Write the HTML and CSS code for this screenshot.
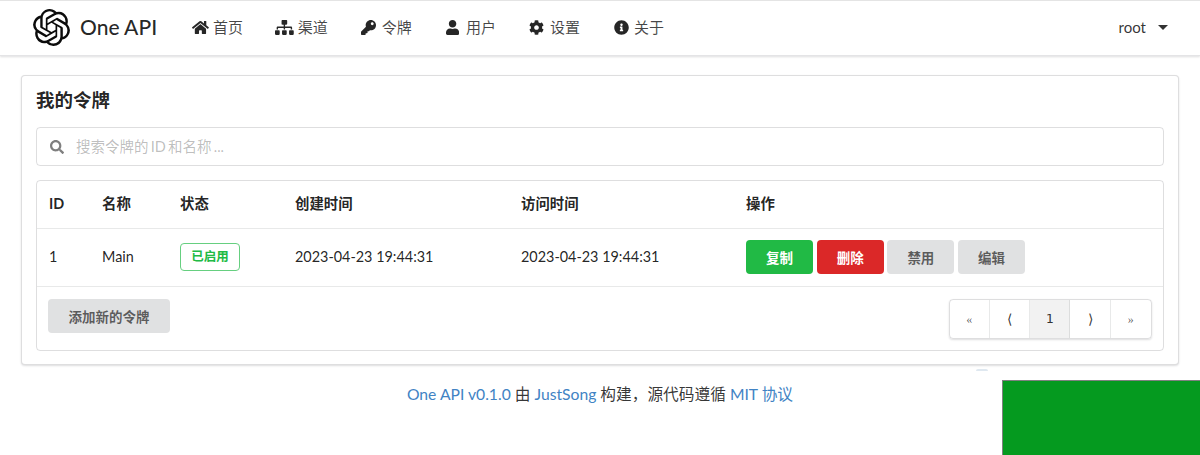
FILE: index.html
```html
<!DOCTYPE html>
<html lang="zh-CN">
<head>
<meta charset="utf-8">
<title>One API</title>
<link rel="stylesheet" href="styles.css">
</head>
<body>
<header class="navbar">
  <a class="brand">
    <svg class="logo" viewBox="0 0 24 24"><path d="M22.2819 9.8211a5.9847 5.9847 0 0 0-.5157-4.9108 6.0462 6.0462 0 0 0-6.5098-2.9A6.0651 6.0651 0 0 0 4.9807 4.1818a5.9847 5.9847 0 0 0-3.9977 2.9 6.0462 6.0462 0 0 0 .7427 7.0966 5.98 5.98 0 0 0 .511 4.9107 6.051 6.051 0 0 0 6.5146 2.9001A5.9847 5.9847 0 0 0 13.2599 24a6.0557 6.0557 0 0 0 5.7718-4.2058 5.9894 5.9894 0 0 0 3.9977-2.9001 6.0557 6.0557 0 0 0-.7475-7.0729zm-9.022 12.6081a4.4755 4.4755 0 0 1-2.8764-1.0408l.1419-.0804 4.7783-2.7582a.7948.7948 0 0 0 .3927-.6813v-6.7369l2.02 1.1686a.071.071 0 0 1 .038.052v5.5826a4.504 4.504 0 0 1-4.4945 4.4944zm-9.6607-4.1254a4.4708 4.4708 0 0 1-.5346-3.0137l.142.0852 4.783 2.7582a.7712.7712 0 0 0 .7806 0l5.8428-3.3685v2.3324a.0804.0804 0 0 1-.0332.0615L9.74 19.9502a4.4992 4.4992 0 0 1-6.1408-1.6464zM2.3408 7.8956a4.485 4.485 0 0 1 2.3655-1.9728V11.6a.7664.7664 0 0 0 .3879.6765l5.8144 3.3543-2.0201 1.1685a.0757.0757 0 0 1-.071 0l-4.8303-2.7865A4.504 4.504 0 0 1 2.3408 7.872zm16.5963 3.8558L13.1038 8.364 15.1192 7.2a.0757.0757 0 0 1 .071 0l4.8303 2.7913a4.4944 4.4944 0 0 1-.6765 8.1042v-5.6772a.79.79 0 0 0-.407-.667zm2.0107-3.0231l-.142-.0852-4.7735-2.7818a.7759.7759 0 0 0-.7854 0L9.409 9.2297V6.8974a.0662.0662 0 0 1 .0284-.0615l4.8303-2.7866a4.4992 4.4992 0 0 1 6.6802 4.66zM8.3065 12.863l-2.02-1.1638a.0804.0804 0 0 1-.038-.0567V6.0742a4.4992 4.4992 0 0 1 7.3757-3.4537l-.142.0805L8.704 5.459a.7948.7948 0 0 0-.3927.6813zm1.0976-2.3654l2.602-1.4998 2.6069 1.4998v2.9994l-2.5974 1.4997-2.6067-1.4997Z"/></svg>
    <span class="brand-name">One API</span>
  </a>
  <nav class="nav-items">
    <a class="nav-item nav-home"><span class="icon-slot"><svg class="icon" viewBox="0 0 576 512"><path d="M280.37 148.26L96 300.11V464a16 16 0 0 0 16 16l112.06-.29a16 16 0 0 0 15.92-16V368a16 16 0 0 1 16-16h64a16 16 0 0 1 16 16v95.64a16 16 0 0 0 16 16.05L464 480a16 16 0 0 0 16-16V300L295.67 148.26a12.19 12.19 0 0 0-15.3 0zM571.6 251.47L488 182.56V44.05a12 12 0 0 0-12-12h-56a12 12 0 0 0-12 12v72.61L318.47 43a48 48 0 0 0-61 0L4.34 251.47a12 12 0 0 0-1.6 16.9l25.5 31A12 12 0 0 0 45.15 301l235.22-193.74a12.19 12.19 0 0 1 15.3 0L530.9 301a12 12 0 0 0 16.9-1.6l25.5-31a12 12 0 0 0-1.7-16.93z"/></svg></span>首页</a>
    <a class="nav-item nav-channel"><span class="icon-slot"><svg class="icon" viewBox="0 0 640 512"><path d="M128 352H32c-17.67 0-32 14.33-32 32v96c0 17.67 14.33 32 32 32h96c17.67 0 32-14.33 32-32v-96c0-17.67-14.33-32-32-32zm-24-80h192v48h48v-48h192v48h48v-57.59c0-21.17-17.23-38.41-38.41-38.41H344v-64h40c17.67 0 32-14.33 32-32V32c0-17.67-14.33-32-32-32H256c-17.67 0-32 14.33-32 32v96c0 17.67 14.33 32 32 32h40v64H94.41C73.23 224 56 241.23 56 262.41V320h48v-48zm264 80h-96c-17.67 0-32 14.33-32 32v96c0 17.67 14.33 32 32 32h96c17.67 0 32-14.33 32-32v-96c0-17.67-14.33-32-32-32zm240 0h-96c-17.67 0-32 14.33-32 32v96c0 17.67 14.33 32 32 32h96c17.67 0 32-14.33 32-32v-96c0-17.67-14.33-32-32-32z"/></svg></span>渠道</a>
    <a class="nav-item nav-token"><span class="icon-slot"><svg class="icon" viewBox="0 0 512 512"><path d="M512 176.001C512 273.203 433.202 352 336 352c-11.22 0-22.19-1.062-32.827-3.069l-24.012 27.014A23.999 23.999 0 0 1 261.223 384H224v40c0 13.255-10.745 24-24 24h-40v40c0 13.255-10.745 24-24 24H24c-13.255 0-24-10.745-24-24v-78.059c0-6.365 2.529-12.47 7.029-16.971l161.802-161.802C163.108 213.814 160 195.271 160 176 160 78.798 238.797.001 335.999 0 433.488-.001 512 78.511 512 176.001zM336 128c0 26.51 21.49 48 48 48s48-21.49 48-48-21.49-48-48-48-48 21.49-48 48z"/></svg></span>令牌</a>
    <a class="nav-item nav-user"><span class="icon-slot"><svg class="icon" viewBox="0 0 448 512"><path d="M224 256c70.7 0 128-57.3 128-128S294.7 0 224 0 96 57.3 96 128s57.3 128 128 128zm89.6 32h-16.7c-22.2 10.2-46.9 16-72.9 16s-50.6-5.8-72.9-16h-16.7C60.2 288 0 348.2 0 422.4V464c0 26.5 21.5 48 48 48h352c26.5 0 48-21.5 48-48v-41.6c0-74.2-60.2-134.4-134.4-134.4z"/></svg></span>用户</a>
    <a class="nav-item nav-setting"><span class="icon-slot"><svg class="icon" viewBox="0 0 512 512"><path d="M487.4 315.7l-42.6-24.6c4.3-23.2 4.3-47 0-70.2l42.6-24.6c4.9-2.8 7.1-8.6 5.5-14-11.1-35.6-30-67.8-54.7-94.6-3.8-4.1-10-5.1-14.8-2.3L380.8 110c-17.9-15.4-38.5-27.3-60.8-35.1V25.8c0-5.6-3.9-10.5-9.4-11.7-36.7-8.2-74.3-7.8-109.2 0-5.5 1.2-9.4 6.1-9.4 11.7V75c-22.2 7.9-42.8 19.8-60.8 35.1L88.7 85.5c-4.9-2.8-11-1.9-14.8 2.3-24.7 26.7-43.6 58.9-54.7 94.6-1.7 5.4.6 11.2 5.5 14L67.3 221c-4.3 23.2-4.3 47 0 70.2l-42.6 24.6c-4.9 2.8-7.1 8.6-5.5 14 11.1 35.6 30 67.8 54.7 94.6 3.8 4.1 10 5.1 14.8 2.3l42.6-24.6c17.9 15.4 38.5 27.3 60.8 35.1v49.2c0 5.6 3.9 10.5 9.4 11.7 36.7 8.2 74.3 7.8 109.2 0 5.5-1.2 9.4-6.1 9.4-11.7v-49.2c22.2-7.9 42.8-19.8 60.8-35.1l42.6 24.6c4.9 2.8 11 1.9 14.8-2.3 24.7-26.7 43.6-58.9 54.7-94.6 1.5-5.5-.7-11.3-5.6-14.1zM256 336c-44.1 0-80-35.9-80-80s35.9-80 80-80 80 35.9 80 80-35.9 80-80 80z"/></svg></span>设置</a>
    <a class="nav-item nav-about"><span class="icon-slot"><svg class="icon" viewBox="0 0 512 512"><path d="M256 8C119.043 8 8 119.083 8 256c0 136.997 111.043 248 248 248s248-111.003 248-248C504 119.083 392.957 8 256 8zm0 110c23.196 0 42 18.804 42 42s-18.804 42-42 42-42-18.804-42-42 18.804-42 42-42zm56 254c0 6.627-5.373 12-12 12h-88c-6.627 0-12-5.373-12-12v-24c0-6.627 5.373-12 12-12h12v-64h-12c-6.627 0-12-5.373-12-12v-24c0-6.627 5.373-12 12-12h64c6.627 0 12 5.373 12 12v100h12c6.627 0 12 5.373 12 12v24z"/></svg></span>关于</a>
  </nav>
  <div class="account"><span>root</span><i class="caret"></i></div>
</header>

<main class="card">
  <h2 class="card-title">我的令牌</h2>
  <div class="search">
    <svg class="search-icon" viewBox="0 0 512 512"><path d="M505 442.7L405.3 343c-4.5-4.5-10.6-7-17-7H372c27.6-35.3 44-79.7 44-128C416 93.1 322.9 0 208 0S0 93.1 0 208s93.1 208 208 208c48.3 0 92.7-16.4 128-44v16.3c0 6.4 2.5 12.5 7 17l99.7 99.7c9.4 9.4 24.6 9.4 33.9 0l28.3-28.3c9.4-9.4 9.4-24.6.1-34zM208 336c-70.7 0-128-57.2-128-128 0-70.7 57.2-128 128-128 70.7 0 128 57.2 128 128 0 70.7-57.2 128-128 128z"/></svg>
    <span class="placeholder">搜索令牌的 ID 和名称 ...</span>
  </div>
  <div class="table-box">
    <table class="tokens">
      <colgroup>
        <col class="c-id"><col class="c-name"><col class="c-status"><col class="c-created"><col class="c-visited"><col>
      </colgroup>
      <thead>
        <tr><th>ID</th><th>名称</th><th>状态</th><th>创建时间</th><th>访问时间</th><th>操作</th></tr>
      </thead>
      <tbody>
        <tr>
          <td>1</td><td>Main</td>
          <td><span class="badge">已启用</span></td>
          <td>2023-04-23 19:44:31</td>
          <td>2023-04-23 19:44:31</td>
          <td class="actions">
            <button class="btn green">复制</button>
            <button class="btn red">删除</button>
            <button class="btn">禁用</button>
            <button class="btn">编辑</button>
          </td>
        </tr>
      </tbody>
    </table>
    <div class="table-foot">
      <button class="btn add">添加新的令牌</button>
      <div class="pager">
        <a class="page small">«</a>
        <a class="page">⟨</a>
        <a class="page active">1</a>
        <a class="page">⟩</a>
        <a class="page small">»</a>
      </div>
    </div>
  </div>
</main>

<footer class="footer">
  <a>One API v0.1.0</a> 由 <a>JustSong</a> 构建，源代码遵循 <a>MIT 协议</a>
</footer>
<div class="arc"></div>
<div class="widget"></div>
</body>
</html>
```

FILE: styles.css
```css
* { box-sizing: border-box; }
html, body { height: 100%; }
body {
  margin: 0;
  overflow: hidden;
  position: relative;
  background: #fff;
  color: rgba(0, 0, 0, .87);
  font-family: Lato, "Noto Sans CJK SC", "Helvetica Neue", Arial, sans-serif;
  font-size: 14.4px;
  line-height: 20px;
  border-top: 1px solid #e4e4e4;
}
.navbar {
  display: flex;
  align-items: center;
  height: 55px;
  padding: 0 32px 2px 33px;
  background: #fff;
  box-shadow: 0 1px 2px 0 rgba(34, 36, 38, .15);
  border-bottom: 1px solid #e4e4e6;
}
.brand { display: flex; align-items: center; }
.logo { width: 37px; height: 37px; fill: #0c0c0c; display: block; }
.brand-name {
  margin-left: 10px;
  font-size: 21px;
  font-weight: 500;
  color: rgba(0, 0, 0, .85);
}
.nav-items { display: flex; align-items: center; margin-left: 35px; }
.nav-item {
  display: flex;
  align-items: center;
  color: rgba(0, 0, 0, .72);
  font-size: 15px;
}
.icon-slot { display: flex; align-items: center; }
.icon { height: 15px; width: auto; fill: rgba(0, 0, 0, .85); display: block; }
.nav-home .icon-slot { margin-right: 4px; }
.nav-channel .icon-slot { margin-right: 4px; }
.nav-token .icon-slot { margin-right: 6px; }
.nav-user .icon-slot { margin-right: 7px; }
.nav-setting .icon-slot { margin-right: 6px; }
.nav-about .icon-slot { margin-right: 5px; }
.nav-channel { margin-left: 32px; }
.nav-token { margin-left: 33px; }
.nav-user { margin-left: 34px; }
.nav-setting { margin-left: 33px; }
.nav-about { margin-left: 34px; }
.account {
  margin-left: auto;
  display: flex;
  align-items: center;
  color: rgba(0, 0, 0, .8);
  font-size: 15px;
}
.caret {
  margin-left: 12px;
  width: 0;
  height: 0;
  border-left: 5px solid transparent;
  border-right: 5px solid transparent;
  border-top: 5px solid rgba(0, 0, 0, .8);
}
.card {
  margin: 19px 21px 0;
  height: 290px;
  padding: 14px;
  border: 1px solid rgba(34, 36, 38, .15);
  border-radius: 4px;
  box-shadow: 0 1px 2px 0 rgba(34, 36, 38, .15);
  background: #fff;
}
.card-title {
  margin: 0;
  font-size: 18.5px;
  line-height: 20px;
  font-weight: 700;
  color: rgba(0, 0, 0, .87);
}
.search {
  display: flex;
  align-items: center;
  margin-top: 17px;
  height: 39px;
  padding-left: 13px;
  border: 1px solid rgba(34, 36, 38, .15);
  border-radius: 4px;
}
.search-icon { width: 14px; height: 14px; fill: rgba(0, 0, 0, .5); display: block; }
.placeholder { margin-left: 12px; color: rgba(0, 0, 0, .27); font-size: 14.5px; word-spacing: -1.5px; }
.table-box {
  margin-top: 14px;
  height: 171px;
  border: 1px solid rgba(34, 36, 38, .15);
  border-radius: 4px;
}
.tokens { width: 100%; border-collapse: collapse; table-layout: fixed; }
.c-id { width: 53px; }
.c-name { width: 78px; }
.c-status { width: 115px; }
.c-created { width: 226px; }
.c-visited { width: 225px; }
.tokens th {
  height: 47px;
  padding: 0 12px;
  text-align: left;
  font-weight: 700;
  font-size: 14.4px;
  border-bottom: 1px solid rgba(34, 36, 38, .1);
}
.tokens td {
  height: 58px;
  padding: 0 12px;
  font-size: 14.4px;
  border-bottom: 1px solid rgba(34, 36, 38, .1);
}
.badge {
  display: inline-block;
  width: 60px;
  height: 28px;
  line-height: 26px;
  text-align: center;
  border: 1px solid #66cf80;
  border-radius: 4px;
  color: #21ba45;
  font-size: 12.5px;
  font-weight: 700;
  vertical-align: middle;
}
.tokens .actions { font-size: 0; }
.btn {
  height: 34px;
  width: 67px;
  padding: 0;
  border: 0;
  border-radius: 4px;
  background: #e0e1e2;
  color: rgba(0, 0, 0, .6);
  font-family: inherit;
  font-size: 13.5px;
  font-weight: 700;
  margin-right: 3.7px;
  vertical-align: middle;
}
.btn.green { background: #21ba45; color: #fff; }
.btn.red { background: #db2828; color: #fff; }
.table-foot {
  display: flex;
  justify-content: space-between;
  align-items: flex-start;
  padding: 12px 11px 0;
}
.btn.add { width: 122px; margin: 0; }
.pager {
  display: flex;
  height: 40px;
  border: 1px solid rgba(34, 36, 38, .15);
  border-radius: 4px;
  box-shadow: 0 1px 2px 0 rgba(34, 36, 38, .15);
}
.page {
  width: 40.3px;
  display: flex;
  align-items: center;
  justify-content: center;
  font-size: 14px;
  color: rgba(0, 0, 0, .8);
  border-right: 1px solid rgba(34, 36, 38, .1);
}
.page:last-child { border-right: 0; }
.page.small { font-size: 12px; color: rgba(0, 0, 0, .65); font-family: "Liberation Serif", serif; }
.page.active { background: rgba(0, 0, 0, .05); font-family: "DejaVu Sans Mono", monospace; font-size: 13px; }
.footer {
  margin-top: 19px;
  text-align: center;
  font-size: 15.7px;
  line-height: 21px;
  color: rgba(0, 0, 0, .8);
}
.footer a { color: #4183c4; }
.arc {
  position: absolute;
  left: 976px;
  top: 368px;
  width: 12px;
  height: 2px;
  border-radius: 6px 6px 0 0;
  background: #dfe8f0;
}
.widget {
  position: absolute;
  left: 1002px;
  top: 379px;
  width: 198px;
  height: 80px;
  background: #059a1f;
  border-top: 1px solid #808080;
  border-left: 1px solid #808080;
}
```
